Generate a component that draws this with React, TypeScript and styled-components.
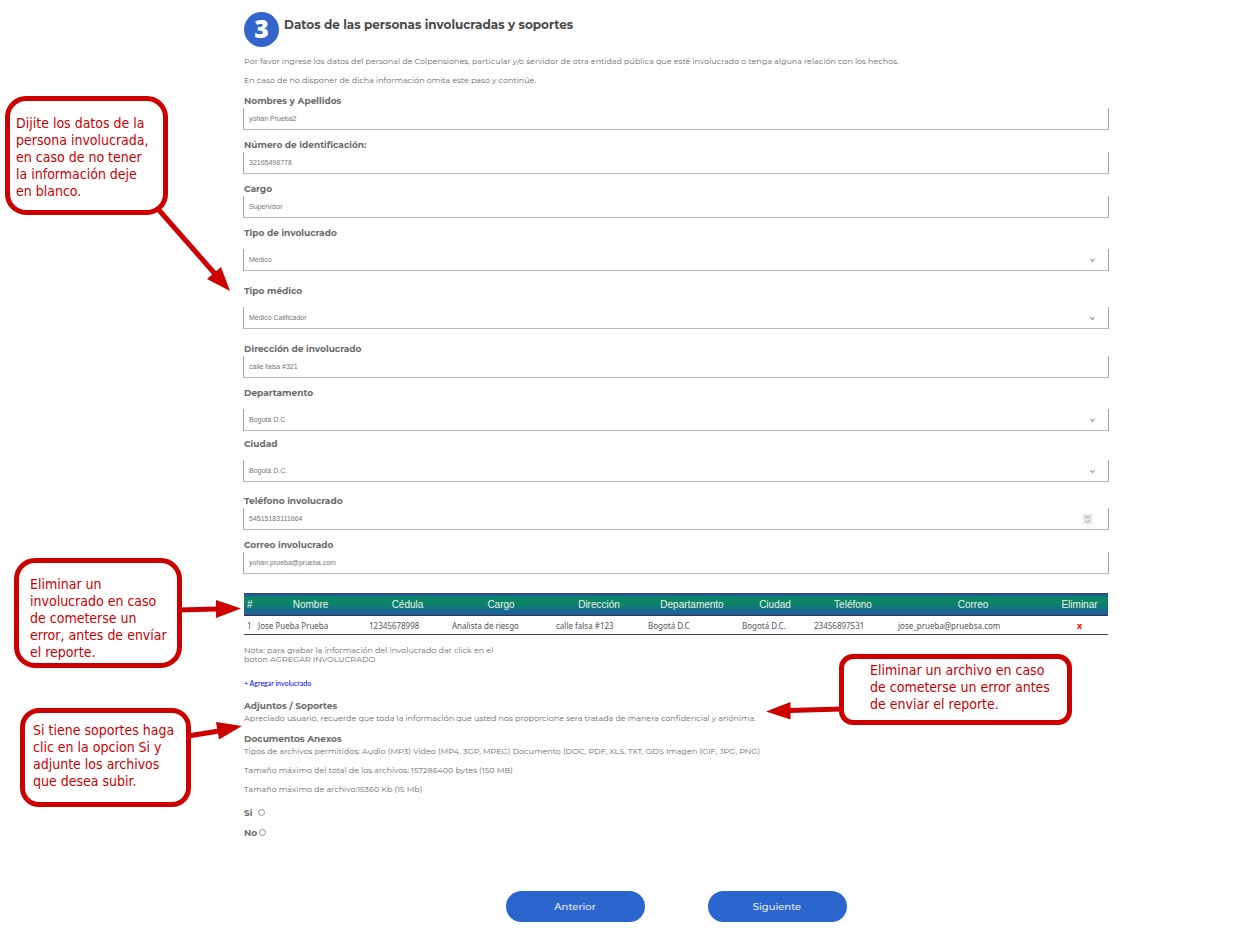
import React from 'react';
import styled, { createGlobalStyle } from 'styled-components';

const display = "Montserrat, Inter, 'Open Sans', sans-serif";
const plain = "'Liberation Sans', Arial, sans-serif";
const red = '#cc0000';

const GlobalStyle = createGlobalStyle`
  *, *::before, *::after { box-sizing: border-box; }
  body { margin: 0; background: #fefefe; color: #6c6c6c; font-family: ${display}; }
`;

const Page = styled.div`
  position: relative;
  padding: 12px 134px 18px 243px;
`;

const Main = styled.main`
  display: flex;
  flex-direction: column;
`;

const TitleBar = styled.header`
  display: flex;
  gap: 5px;
  padding-left: 1px;
  margin-bottom: 7px;
`;

const StepBadge = styled.span`
  width: 35px;
  height: 35px;
  border-radius: 50%;
  background: #3366cc;
  color: #fff;
  font: 800 25px/33px 'Open Sans', sans-serif;
  text-align: center;
`;

const Title = styled.h1`
  margin: 0;
  color: #4a4a4a;
  font-size: 12px;
  font-weight: 700;
  line-height: 25px;
`;

const Text = styled.p`
  margin: 0;
  padding-left: 1px;
  font-size: 8px;
  line-height: 14px;
  & + & { margin-top: 5px; }
`;

const Form = styled.form`
  display: flex;
  flex-direction: column;
  margin-top: 7px;
`;

const FieldRow = styled.div<{ $after: number }>`
  display: flex;
  flex-direction: column;
  margin-bottom: ${(p) => p.$after}px;
`;

const Label = styled.label<{ $spaced?: boolean }>`
  padding-left: 1px;
  margin-bottom: ${(p) => (p.$spaced ? 9 : 0)}px;
  font-size: 9px;
  font-weight: 700;
  line-height: 14px;
`;

const control = `
  width: 100%;
  height: 22px;
  margin: 0;
  padding: 0 5px;
  appearance: none;
  border: 1px solid #a0a0a0;
  border-top: 0;
  border-bottom-color: #bbb;
  border-radius: 0;
  background: transparent;
  color: #777;
  font: 7px/12px ${plain};
  outline: none;
`;

const Input = styled.input`
  ${control}
  height: auto;
  padding: 5px 5px 4px;
  &::-webkit-textfield-decoration-container { height: 12px; }
`;
const Select = styled.select`${control}`;

const ControlBox = styled.div`
  position: relative;
  display: flex;
  height: 22px;
`;

const Chevron = styled.svg`
  position: absolute;
  right: 14px;
  top: 9px;
  width: 5px;
  height: 5px;
  pointer-events: none;
`;

const Spinner = styled.svg`
  position: absolute;
  right: 17px;
  top: 6px;
  width: 9px;
  height: 10px;
  background: #e6e6ea;
`;

const Table = styled.table`
  margin: 19px 1px 0;
  table-layout: fixed;
  width: calc(100% - 2px);
  border-collapse: collapse;
  border-top: 1px solid #444;
  border-bottom: 1px solid #444;

  thead tr {
    height: 22px;
    border-bottom: 1px solid #333;
    background: linear-gradient(#1f5aa6 0, #1f5aa6 1px, #0c8562 3px, #0c8562 9px, #1f5aa6 21px);
  }
  tbody tr { height: 19px; }
  th, td { padding: 0 3px; white-space: nowrap; }
  th {
    color: #e8f4f0;
    font: 10px ${plain};
    text-align: center;
  }
  td {
    color: #555;
    font: 8px 'Noto Sans', sans-serif;
    text-align: left;
  }
  td:last-child { text-align: center; }
`;

const DeleteButton = styled.button`
  padding: 0;
  border: 0;
  background: none;
  color: #f00;
  font: 700 9px 'Open Sans', sans-serif;
`;

const Note = styled.p`
  width: 270px;
  margin: 11px 0 0;
  padding-left: 1px;
  font-size: 8px;
  line-height: 9px;
`;

const AddLink = styled.a`
  align-self: flex-start;
  margin: 14px 0 13px;
  padding-left: 1px;
  color: #00f;
  font: 7px/10px Lato, ${plain};
  text-decoration: none;
`;

const Section = styled.section`
  & + & { margin-top: 9px; }
`;

const SectionTitle = styled.h2`
  margin: 0;
  padding-left: 1px;
  font-size: 9px;
  font-weight: 700;
  line-height: 10px;
`;

const Options = styled.div`
  display: flex;
  flex-direction: column;
  align-items: flex-start;
  margin-top: 6px;
`;

const Option = styled.label<{ $gap: number }>`
  display: flex;
  align-items: center;
  gap: ${(p) => p.$gap}px;
  height: 20px;
  padding-left: 1px;
  font-size: 9px;
  font-weight: 700;
`;

const Radio = styled.input`
  appearance: none;
  width: 7px;
  height: 7px;
  margin: 0;
  border: 1px solid #8a8a94;
  border-radius: 50%;
  background: #fff;
`;

const Actions = styled.div`
  display: flex;
  justify-content: center;
  gap: 63px;
  margin-top: 49px;
`;

const PillButton = styled.button`
  width: 139px;
  height: 31px;
  border: 0;
  border-radius: 16px;
  background: #2b66cf;
  color: #e6eefb;
  font: 500 10px ${display};
`;

type Box = { left: number; top: number; width: number; height: number };

const Callout = styled.aside<{ $box: Box; $pad: string; $radius: number }>`
  position: absolute;
  left: ${(p) => p.$box.left}px;
  top: ${(p) => p.$box.top}px;
  width: ${(p) => p.$box.width}px;
  height: ${(p) => p.$box.height}px;
  padding: ${(p) => p.$pad};
  border: 5px solid ${red};
  border-radius: ${(p) => p.$radius}px;
  color: ${red};
  font: 14px/17px 'DejaVu Sans Condensed', 'DejaVu Sans', sans-serif;
  white-space: pre;
`;

const ArrowLayer = styled.svg<{ $left: number; $top: number }>`
  position: absolute;
  left: ${(p) => p.$left}px;
  top: ${(p) => p.$top}px;
  pointer-events: none;
`;

function Arrow({ left, top, width, height, line, head }: Box & { line: string; head: string }) {
  return (
    <ArrowLayer $left={left} $top={top} width={width} height={height} viewBox={`${left} ${top} ${width} ${height}`} aria-hidden>
      <path d={line} stroke={red} strokeWidth={5} fill="none" />
      <path d={head} fill={red} />
    </ArrowLayer>
  );
}

type FieldProps = {
  id: string;
  label: string;
  value: string;
  kind?: 'text' | 'select' | 'number';
  after?: number;
};

function Field({ id, label, value, kind = 'text', after = 8 }: FieldProps) {
  return (
    <FieldRow $after={after}>
      <Label htmlFor={id} $spaced={kind === 'select'}>{label}</Label>
      <ControlBox>
        {kind === 'select' ? (
          <>
            <Select id={id} defaultValue={value}><option>{value}</option></Select>
            <Chevron viewBox="0 0 5 5"><path d="M.5 1 2.5 3.5 4.5 1" fill="none" stroke="#999" strokeWidth="1.2" /></Chevron>
          </>
        ) : (
          <Input id={id} type="text" inputMode={kind === 'number' ? 'numeric' : undefined} defaultValue={value} />
        )}
        {kind === 'number' && (
          <Spinner viewBox="0 0 9 10">
            <path d="M2.5 4 4.5 2 6.5 4M2.5 6.5 4.5 8.5 6.5 6.5" fill="none" stroke="#999" />
          </Spinner>
        )}
      </ControlBox>
    </FieldRow>
  );
}

const columns: [string, number][] = [
  ['#', 11], ['Nombre', 111], ['Cédula', 83], ['Cargo', 104], ['Dirección', 92],
  ['Departamento', 94], ['Ciudad', 72], ['Teléfono', 84], ['Correo', 156], ['Eliminar', 57],
];

const person = [
  '1', 'Jose Pueba Prueba', '12345678998', 'Analista de riesgo', 'calle falsa #123',
  'Bogotá D.C', 'Bogotá D.C.', '23456897531', 'jose_prueba@pruebsa.com',
];

export default function App() {
  return (
    <Page>
      <GlobalStyle />
      <Main>
        <TitleBar>
          <StepBadge>3</StepBadge>
          <Title>Datos de las personas involucradas y soportes</Title>
        </TitleBar>
        <Text>Por favor ingrese los datos del personal de Colpensiones, particular y/o servidor de otra entidad pública que esté involucrado o tenga alguna relación con los hechos.</Text>
        <Text>En caso de no disponer de dicha información omita este paso y continúe.</Text>
        <Form>
          <Field id="nombre" label="Nombres y Apellidos" value="yohan Prueba2" />
          <Field id="numero" label="Número de identificación:" value="32165498778" />
          <Field id="cargo" label="Cargo" value="Supervisor" />
          <Field id="tipo" label="Tipo de involucrado" value="Médico" kind="select" after={13} />
          <Field id="medico" label="Tipo médico" value="Médico Calificador" kind="select" after={13} />
          <Field id="direccion" label="Dirección de involucrado" value="calle falsa #321" />
          <Field id="departamento" label="Departamento" value="Bogotá D.C" kind="select" after={6} />
          <Field id="ciudad" label="Ciudad" value="Bogotá D.C." kind="select" after={12} />
          <Field id="telefono" label="Teléfono involucrado" value="54515183111664" kind="number" />
          <Field id="correo" label="Correo involucrado" value="yohan.prueba@prueba.com" after={0} />
        </Form>
        <Table>
          <colgroup>{columns.map(([name, w]) => <col key={name} width={w} />)}</colgroup>
          <thead>
            <tr>{columns.map(([name]) => <th key={name} scope="col">{name}</th>)}</tr>
          </thead>
          <tbody>
            <tr>
              {person.map((v, i) => <td key={i}>{v}</td>)}
              <td><DeleteButton type="button">x</DeleteButton></td>
            </tr>
          </tbody>
        </Table>
        <Note>Nota: para grabar la información del involucrado dar click en el<br />boton AGREGAR INVOLUCRADO</Note>
        <AddLink href="#agregar">+ Agregar involucrado</AddLink>
        <Section>
          <SectionTitle>Adjuntos / Soportes</SectionTitle>
          <Text>Apreciado usuario, recuerde que toda la información que usted nos proporcione sera tratada de manera confidencial y anónima.</Text>
        </Section>
        <Section>
          <SectionTitle>Documentos Anexos</SectionTitle>
          <Text>Tipos de archivos permitidos: Audio (MP3) Video (MP4, 3GP, MPEG) Documento (DOC, PDF, XLS, TXT, ODS Imagen (GIF, JPG, PNG)</Text>
          <Text>Tamaño máximo del total de los archivos: 157286400 bytes (150 MB)</Text>
          <Text>Tamaño máximo de archivo:15360 Kb (15 Mb)</Text>
        </Section>
        <Options>
          <Option $gap={6}>Si<Radio type="radio" name="soportes" /></Option>
          <Option $gap={2}>No<Radio type="radio" name="soportes" /></Option>
        </Options>
        <Actions>
          <PillButton type="button">Anterior</PillButton>
          <PillButton type="button">Siguiente</PillButton>
        </Actions>
      </Main>

      <Callout $box={{ left: 5, top: 96, width: 163, height: 119 }} $pad="14px 6px" $radius={21}>{'Dijite los datos de la\npersona involucrada,\nen caso de no tener\nla información deje\nen blanco.'}</Callout>
      <Callout $box={{ left: 14, top: 558, width: 168, height: 110 }} $pad="13px 11px" $radius={21}>{'Eliminar un\ninvolucrado en caso\nde cometerse un\nerror, antes de envíar\nel reporte.'}</Callout>
      <Callout $box={{ left: 20, top: 708, width: 171, height: 99 }} $pad="9px 8px" $radius={19}>{'Si tiene soportes haga\nclic en la opcion Si y\nadjunte los archivos\nque desea subir.'}</Callout>
      <Callout $box={{ left: 839, top: 654, width: 233, height: 71 }} $pad="3px 26px" $radius={14}>{'Eliminar un archivo en caso\nde cometerse un error antes\nde enviar el reporte.'}</Callout>
      <Arrow left={150} top={200} width={90} height={100} line="M158 209 216 275" head="M230 291 207 279 221 267Z" />
      <Arrow left={178} top={595} width={66} height={30} line="M179 610 217 609" head="M241 608.5 216 600 216 618Z" />
      <Arrow left={184} top={715} width={62} height={30} line="M188 736 219 731" head="M242 726 216 722 219 739.5Z" />
      <Arrow left={762} top={695} width={84} height={30} line="M842 709 789 710.5" head="M766 711.5 790.5 702 790.5 719.5Z" />
    </Page>
  );
}
